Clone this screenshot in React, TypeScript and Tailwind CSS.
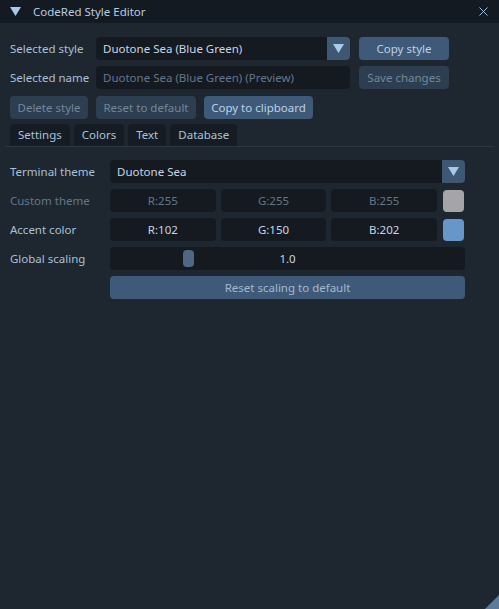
import { X } from "lucide-react";

const font = { fontFamily: '"Noto Sans", "Open Sans", sans-serif' };

function Arrow({ className = "" }: { className?: string }) {
  return (
    <svg width="11" height="9" viewBox="0 0 11 9" className={className}>
      <path d="M0 0 H11 L5.5 9 Z" fill="currentColor" />
    </svg>
  );
}

function Combo({ value, width }: { value: string; width: string }) {
  return (
    <div className={`flex h-[23px] ${width} overflow-hidden rounded-[4px] bg-[#151a20]`}>
      <div className="flex flex-1 items-center px-[7px] text-[#c6d6e6]">{value}</div>
      <div className="flex w-[23px] items-center justify-center bg-[#3e5874] text-[#a9c9ec]">
        <Arrow />
      </div>
    </div>
  );
}

function Btn({ label, enabled, className = "" }: { label: string; enabled?: boolean; className?: string }) {
  return (
    <div
      className={`flex h-[23px] items-center justify-center whitespace-nowrap rounded-[4px] ${
        enabled ? "bg-[#3f5a78] text-[#bcd1e6]" : "bg-[#2d3e50] text-[#72879c]"
      } ${className}`}
    >
      {label}
    </div>
  );
}

function Field({ text, dim }: { text: string; dim?: boolean }) {
  return (
    <div
      className={`flex h-[23px] flex-1 items-center justify-center rounded-[4px] bg-[#151a20] ${
        dim ? "text-[#63778b]" : "text-[#c6d6e6]"
      }`}
    >
      {text}
    </div>
  );
}

export default function App() {
  return (
    <div
      style={font}
      className="flex h-[609px] w-[499px] flex-col whitespace-nowrap bg-[#1e2730] text-[11.5px] leading-none"
    >
      <div className="flex h-[23px] items-center bg-[#141a21] pl-[10px] pr-[8px]">
        <Arrow className="text-[#a9c9ec]" />
        <span className="ml-[12px] flex-1 text-[#b9cde2]">CodeRed Style Editor</span>
        <X size={15} strokeWidth={1.5} className="text-[#a9c9ec]" />
      </div>

      <div className="flex flex-col px-[10px] pt-[14px]">
        <div className="flex items-center">
          <span className="w-[86px] text-[#a9c0d7]">Selected style</span>
          <Combo value="Duotone Sea (Blue Green)" width="w-[254px]" />
          <Btn label="Copy style" enabled className="ml-[9px] w-[90px]" />
        </div>
        <div className="mt-[6px] flex items-center">
          <span className="w-[86px] text-[#a9c0d7]">Selected name</span>
          <div className="flex h-[23px] w-[254px] items-center rounded-[4px] bg-[#151a20] px-[7px] text-[#62778c]">
            Duotone Sea (Blue Green) (Preview)
          </div>
          <Btn label="Save changes" className="ml-[9px] w-[90px]" />
        </div>
        <div className="mt-[7px] flex gap-[8px]">
          <Btn label="Delete style" className="w-[78px]" />
          <Btn label="Reset to default" className="w-[100px]" />
          <Btn label="Copy to clipboard" enabled className="w-[109px]" />
        </div>
      </div>

      <div className="mx-[5px] mt-[5px] flex gap-[4px] border-b border-[#2b3642] px-[5px]">
        {["Settings", "Colors", "Text", "Database"].map((t) => (
          <div key={t} className="flex h-[22px] items-center rounded-t-[4px] bg-[#161c23] px-[8px] text-[#a9c2dc]">
            {t}
          </div>
        ))}
      </div>

      <div className="flex flex-col px-[10px] pt-[13px]">
        <div className="flex items-center">
          <span className="w-[100px] text-[#a9c0d7]">Terminal theme</span>
          <Combo value="Duotone Sea" width="w-[355px]" />
        </div>
        <div className="mt-[6px] flex items-center">
          <span className="w-[100px] text-[#63778b]">Custom theme</span>
          <div className="flex w-[327px] gap-[5px]">
            <Field text="R:255" dim />
            <Field text="G:255" dim />
            <Field text="B:255" dim />
          </div>
          <div className="ml-[6px] h-[22px] w-[21px] rounded-[4px] bg-[#a5a5a8]" />
        </div>
        <div className="mt-[6px] flex items-center">
          <span className="w-[100px] text-[#a9c0d7]">Accent color</span>
          <div className="flex w-[327px] gap-[5px]">
            <Field text="R:102" />
            <Field text="G:150" />
            <Field text="B:202" />
          </div>
          <div className="ml-[6px] h-[22px] w-[21px] rounded-[4px] bg-[#6696ca]" />
        </div>
        <div className="mt-[6px] flex items-center">
          <span className="w-[100px] text-[#a9c0d7]">Global scaling</span>
          <div className="relative flex h-[23px] w-[355px] items-center justify-center rounded-[4px] bg-[#151a20] text-[#c6d6e6]">
            <div className="absolute left-[73px] top-[3px] h-[17px] w-[11px] rounded-[4px] bg-[#4f6782]" />
            1.0
          </div>
        </div>
        <div className="mt-[6px] flex">
          <div className="w-[100px]" />
          <div className="flex h-[23px] w-[355px] items-center justify-center rounded-[4px] bg-[#3f5a78] text-[#a3b9d0]">
            Reset scaling to default
          </div>
        </div>
      </div>

      <div className="flex-1" />
      <div className="flex justify-end">
        <svg width="14" height="14" viewBox="0 0 14 14">
          <path d="M14 0 V14 H0 Z" fill="#5f7a99" />
        </svg>
      </div>
    </div>
  );
}
